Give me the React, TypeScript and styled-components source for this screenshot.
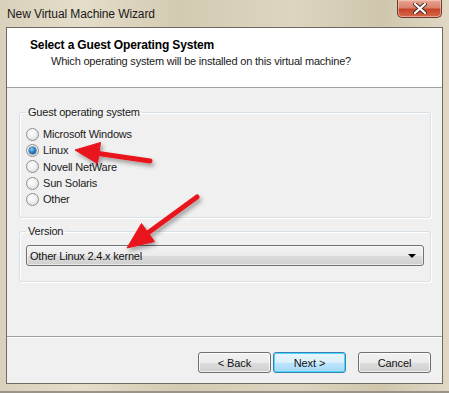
import React from "react";
import styled, { createGlobalStyle } from "styled-components";

const Global = createGlobalStyle`
  html, body { margin: 0; padding: 0; background: #d6cdb6; }
  body { font-family: "Liberation Sans", Arial, sans-serif; }
`;

const Window = styled.div`
  position: relative;
  width: 449px;
  height: 393px;
  box-sizing: border-box;
  display: flex;
  flex-direction: column;
  background: linear-gradient(90deg, #d9d1bb 0%, #e4ddc9 18%, #d3cab2 40%, #ddd5c0 65%, #cfc6ad 85%, #e0d8c4 100%);
  border-bottom: 2px solid #9a9488;
  overflow: hidden;
`;

const TitleBar = styled.div`
  height: 27px;
  flex: none;
  display: flex;
  align-items: flex-start;
  padding: 0 7px;
`;

const TitleText = styled.div`
  flex: 1;
  padding-top: 7px;
  font-size: 12px;
  color: #1a1a1a;
  letter-spacing: -0.1px;
`;

const CloseButton = styled.div`
  width: 45px;
  height: 18px;
  box-sizing: border-box;
  border: 1px solid #6b3a30;
  border-top: none;
  border-radius: 0 0 5px 5px;
  background: linear-gradient(180deg, #e8a694 0%, #d9826b 45%, #c4442a 55%, #d86a48 100%);
  box-shadow: inset 0 0 0 1px rgba(255, 220, 210, 0.5);
  display: flex;
  align-items: center;
  justify-content: center;
`;

const Client = styled.div`
  margin: 0 6px;
  height: 357px;
  flex: none;
  box-sizing: border-box;
  border: 1px solid #6d6a62;
  background: #f0f0f0;
  display: flex;
  flex-direction: column;
`;

const Header = styled.div`
  height: 60px;
  flex: none;
  background: #ffffff;
  border-bottom: 1px solid #a0a0a0;
  padding: 10px 0 0 23px;
  box-sizing: border-box;
`;

const HeaderTitle = styled.div`
  font-weight: bold;
  font-size: 12px;
  color: #000;
  letter-spacing: -0.15px;
  line-height: 15px;
`;

const HeaderSub = styled.div`
  font-size: 11px;
  color: #1a1a1a;
  padding-left: 21px;
  line-height: 15px;
  margin-top: 1px;
  letter-spacing: -0.2px;
`;

const Body = styled.div`
  flex: 1;
  padding: 17px 11px 0 12px;
  display: flex;
  flex-direction: column;
  gap: 6px;
`;

const Group = styled.fieldset<{ $h: number }>`
  margin: 0;
  height: ${(p) => p.$h}px;
  box-sizing: border-box;
  border: 1px solid #d5dfe5;
  border-radius: 3px;
  padding: 0 6px;
  box-shadow: inset 1px 1px 0 #ffffff, 1px 1px 0 #ffffff;
`;

const Legend = styled.legend`
  font-size: 11px;
  color: #1a1a1a;
  padding: 0 2px;
  line-height: 15px;
  letter-spacing: -0.2px;
`;

const RadioList = styled.div`
  display: flex;
  flex-direction: column;
  padding-top: 6px;
`;

const RadioRow = styled.label`
  height: 16.3px;
  display: flex;
  align-items: center;
  gap: 4px;
  font-size: 11px;
  color: #1a1a1a;
  letter-spacing: -0.2px;
`;

const RadioCircle = styled.span<{ $on?: boolean }>`
  width: 13px;
  height: 13px;
  box-sizing: border-box;
  border-radius: 50%;
  border: 1px solid #8e8f8f;
  background: radial-gradient(circle at 40% 35%, #ffffff 0%, #f0f0f0 45%, #cfcfcf 100%);
  display: flex;
  align-items: center;
  justify-content: center;
  flex: none;
  &::after {
    content: "";
    display: ${(p) => (p.$on ? "block" : "none")};
    width: 7px;
    height: 7px;
    border-radius: 50%;
    background: radial-gradient(circle at 40% 35%, #8fd0f5 0%, #2b8ad0 40%, #0d3f74 100%);
    box-shadow: 0 0 0 0.5px #17466e;
  }
`;

const Combo = styled.div`
  margin-top: 6px;
  height: 21px;
  box-sizing: border-box;
  border: 1px solid #707070;
  border-radius: 3px;
  background: linear-gradient(180deg, #f2f2f2 0%, #ebebeb 50%, #dddddd 51%, #cfcfcf 100%);
  box-shadow: inset 0 0 0 1px rgba(255, 255, 255, 0.6);
  display: flex;
  align-items: center;
  padding: 0 7px 0 3px;
  font-size: 11px;
  color: #111;
  letter-spacing: -0.2px;
`;

const ComboText = styled.span`
  flex: 1;
`;

const Footer = styled.div`
  height: 47px;
  flex: none;
  border-top: 1px solid #a0a0a0;
  box-shadow: inset 0 1px 0 #ffffff;
  display: flex;
  align-items: flex-start;
  justify-content: flex-end;
  padding: 15px 11px 0 0;
  box-sizing: border-box;
`;

const Button = styled.div<{ $default?: boolean; $gap?: number }>`
  width: 73px;
  height: 21px;
  box-sizing: border-box;
  margin-left: ${(p) => p.$gap ?? 0}px;
  border: 1px solid ${(p) => (p.$default ? "#3c7fb1" : "#707070")};
  border-radius: 3px;
  background: ${(p) =>
    p.$default
      ? "linear-gradient(180deg, #eaf6fd 0%, #d9f0fc 50%, #bee6fd 51%, #a7d9f5 100%)"
      : "linear-gradient(180deg, #f2f2f2 0%, #ebebeb 50%, #dddddd 51%, #cfcfcf 100%)"};
  box-shadow: inset 0 0 0 1px ${(p) => (p.$default ? "#48d8fb" : "rgba(255,255,255,0.7)")};
  display: flex;
  align-items: center;
  justify-content: center;
  font-size: 11px;
  color: #111;
  letter-spacing: -0.1px;
`;

const Overlay = styled.svg`
  position: absolute;
  left: 0;
  top: 0;
  pointer-events: none;
`;

export default function App() {
  return (
    <>
      <Global />
      <Window>
        <TitleBar>
          <TitleText>New Virtual Machine Wizard</TitleText>
          <CloseButton>
            <svg width="14" height="11" viewBox="0 0 14 11">
              <path d="M2 1 L12 10 M12 1 L2 10" stroke="#4a2a24" strokeWidth="4" strokeLinecap="round" />
              <path d="M2 1 L12 10 M12 1 L2 10" stroke="#ffffff" strokeWidth="2.2" strokeLinecap="round" />
            </svg>
          </CloseButton>
        </TitleBar>
        <Client>
          <Header>
            <HeaderTitle>Select a Guest Operating System</HeaderTitle>
            <HeaderSub>Which operating system will be installed on this virtual machine?</HeaderSub>
          </Header>
          <Body>
            <Group $h={113}>
              <Legend>Guest operating system</Legend>
              <RadioList>
                {["Microsoft Windows", "Linux", "Novell NetWare", "Sun Solaris", "Other"].map((o) => (
                  <RadioRow key={o}>
                    <RadioCircle $on={o === "Linux"} />
                    {o}
                  </RadioRow>
                ))}
              </RadioList>
            </Group>
            <Group $h={58}>
              <Legend>Version</Legend>
              <Combo>
                <ComboText>Other Linux 2.4.x kernel</ComboText>
                <svg width="8" height="4" viewBox="0 0 8 4">
                  <path d="M0 0 L8 0 L4 4 Z" fill="#000" />
                </svg>
              </Combo>
            </Group>
          </Body>
          <Footer>
            <Button>&lt; Back</Button>
            <Button $default $gap={2}>Next &gt;</Button>
            <Button $gap={12}>Cancel</Button>
          </Footer>
        </Client>
        <Overlay width="449" height="393" viewBox="0 0 449 393">
          <defs>
            <filter id="sh" x="-20%" y="-20%" width="140%" height="140%">
              <feDropShadow dx="2" dy="3" stdDeviation="2" floodColor="#000" floodOpacity="0.35" />
            </filter>
          </defs>
          <g filter="url(#sh)" fill="#e8161b" stroke="#e8161b">
            <line x1="150" y1="161" x2="95" y2="153" strokeWidth="5" strokeLinecap="round" />
            <polygon points="75,150 100.5,142.5 97.5,163.5" strokeWidth="1" strokeLinejoin="round" />
            <line x1="197" y1="197" x2="145" y2="235" strokeWidth="5" strokeLinecap="round" />
            <polygon points="127,248 154.5,241.5 141.5,223.5" strokeWidth="1" strokeLinejoin="round" />
          </g>
        </Overlay>
      </Window>
    </>
  );
}
